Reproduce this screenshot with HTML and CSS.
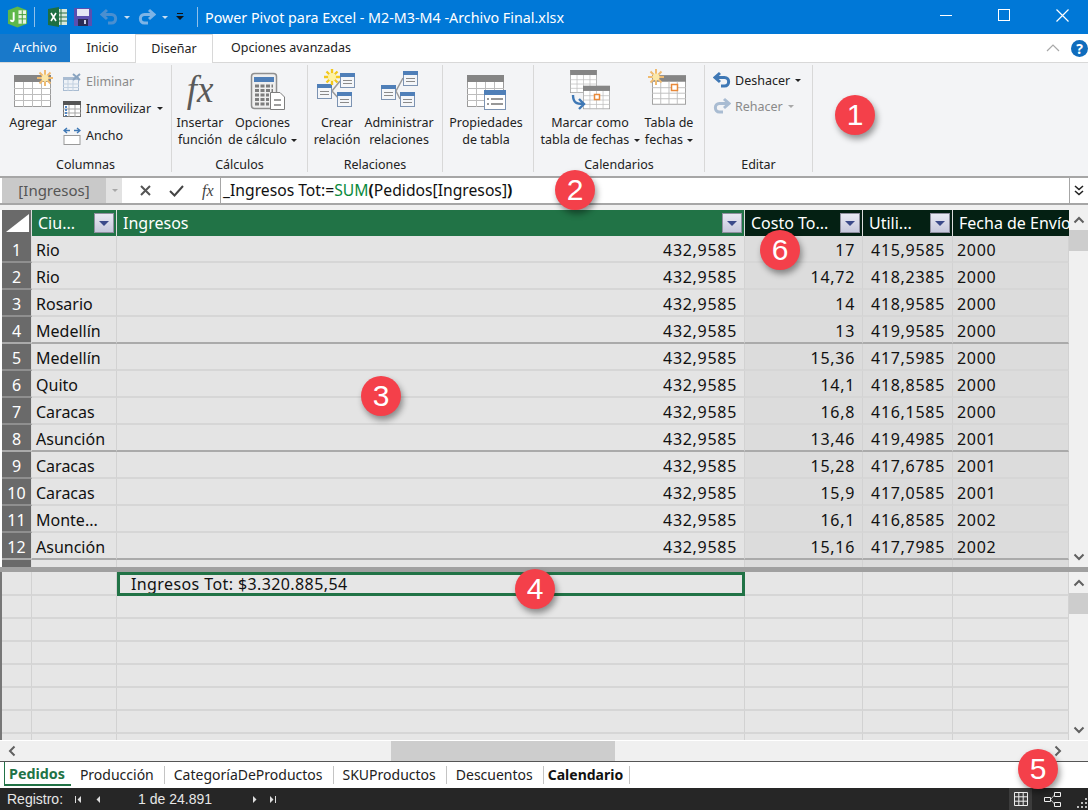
FILE: index.html
```html
<!DOCTYPE html>
<html>
<head>
    <title>Power Pivot para Excel</title>
    <link rel="stylesheet" href="styles.css">
</head>
<body>
<svg class="defs" width="0" height="0">
    <symbol id="tbl" viewBox="0 0 37 32">
        <rect x="0.5" y="0.5" width="36" height="31" fill="#fff" stroke="#9b9b9b"/>
        <rect x="0" y="0" width="37" height="7" fill="#858585"/>
        <path d="M0 13.5H37M0 19.5H37M0 25.5H37M9.5 7V32M18.5 7V32M27.5 7V32" stroke="#bdbdbd" fill="none"/>
    </symbol>
    <symbol id="win" viewBox="0 0 15 15">
        <rect x="0.5" y="0.5" width="14" height="14" fill="#f4f6f9" stroke="#7c93b2"/>
        <rect x="0" y="0" width="15" height="4" fill="#4f7fb8"/>
        <path d="M3 7.5H12M3 10.5H12" stroke="#8a8a8a" fill="none"/>
    </symbol>
    <symbol id="star" viewBox="0 0 16 16">
        <path d="M8 0V16M0 8H16M2.5 2.5L13.5 13.5M13.5 2.5L2.5 13.5" stroke="#f0bb70" stroke-width="2" fill="none"/>
        <circle cx="8" cy="8" r="3.5" fill="#fbe7a8"/>
    </symbol>
    <symbol id="star-y" viewBox="0 0 16 16">
        <path d="M8 0V16M0 8H16M2.5 2.5L13.5 13.5M13.5 2.5L2.5 13.5" stroke="#f2c81e" stroke-width="2.4" fill="none"/>
        <circle cx="8" cy="8" r="4" fill="#fff3a0"/>
    </symbol>
    <symbol id="undo" viewBox="0 0 18 18">
        <path d="M7 2L2 6.5L7 11M2.5 6.5H11.5C17 6.5 17 15 11.5 15H8" stroke="currentColor" stroke-width="3" fill="none"/>
    </symbol>
    <symbol id="chev" viewBox="0 0 12 8">
        <path d="M1.5 6.5L6 2L10.5 6.5" stroke="#606060" stroke-width="2" fill="none"/>
    </symbol>
</svg>

<div class="titlebar">
    <svg class="qa qa-first" width="21" height="22" viewBox="0 0 22 22">
        <path d="M1 4L11 0L21 4V18L11 22L1 18Z" fill="#5fb84a"/>
        <path d="M12 4H20V18H12Z" fill="#e8f5e0"/>
        <path d="M12 8.5H20M12 13H20M16 4V18" stroke="#3f9a35" fill="none"/>
        <path d="M7 6V14C7 16 4 16 4 14" stroke="#fff" stroke-width="2" fill="none"/>
    </svg>
    <span class="qa-sep"></span>
    <svg class="qa qa-xl" width="19" height="20" viewBox="0 0 19 20">
        <rect x="8" y="2" width="11" height="16" fill="#d8e8dc"/>
        <path d="M8 6H19M8 10H19M8 14H19M13 2V18" stroke="#2a6f45" fill="none"/>
        <path d="M0 2L11 0V20L0 18Z" fill="#1d6f42"/>
        <path d="M3 6L8 14M8 6L3 14" stroke="#fff" stroke-width="1.6" fill="none"/>
    </svg>
    <svg class="qa qa-save" width="18" height="18" viewBox="0 0 18 18">
        <path d="M0 0H16L18 2V18H0Z" fill="#5a4fb0"/>
        <rect x="3" y="1" width="12" height="7" fill="#e4e6f5"/>
        <rect x="4" y="11" width="10" height="7" fill="#2b2b55"/>
        <rect x="10" y="12" width="2" height="4" fill="#cfd2e8"/>
    </svg>
    <svg class="qa qa-undo" width="18" height="18"><use href="#undo"/></svg>
    <span class="caret caret-white"></span>
    <svg class="qa qa-redo" width="18" height="18"><use href="#undo"/></svg>
    <span class="caret caret-white"></span>
    <span class="qa-custom"></span>
    <span class="qa-sep qa-sep2"></span>
    <span class="doc-title">Power Pivot para Excel - M2-M3-M4 -Archivo Final.xlsx</span>
    <div class="winbtns">
        <span class="win-min"></span>
        <span class="win-max"></span>
        <svg width="13" height="13" viewBox="0 0 13 13"><path d="M0.5 0.5L12.5 12.5M12.5 0.5L0.5 12.5" stroke="#fff" stroke-width="1.2"/></svg>
    </div>
</div>

<div class="tabs">
    <div class="tab tab-file">Archivo</div>
    <div class="tab tab-home">Inicio</div>
    <div class="tab tab-on">Diseñar</div>
    <div class="tab tab-adv">Opciones avanzadas</div>
    <svg class="collapse" width="14" height="8" viewBox="0 0 14 8"><path d="M1 7L7 1L13 7" stroke="#a8a8a8" stroke-width="1.2" fill="none"/></svg>
    <span class="help">?</span>
</div>

<div class="ribbon">
    <div class="group g1">
        <div class="group-body">
            <div class="big b-agregar">
                <svg width="44" height="46" viewBox="0 0 44 46">
                    <use href="#tbl" x="3" y="7" width="37" height="32"/>
                    <use href="#star" x="26" y="2" width="16" height="16"/>
                </svg>
                <span>Agregar</span>
            </div>
            <div class="smalls s-cols">
                <div class="small dim">
                    <svg width="18" height="18" viewBox="0 0 18 18">
                        <rect x="0.5" y="4.5" width="15" height="13" fill="#eef2f7" stroke="#a9bcd2"/>
                        <rect x="0" y="4" width="16" height="3" fill="#a9bcd2"/>
                        <path d="M5 7V18M10 7V18M0 11H16M0 14.5H16" stroke="#c3d1e0"/>
                        <path d="M10 1L17 7M17 1L10 7" stroke="#8aa4c0" stroke-width="2"/>
                    </svg>
                    <span>Eliminar</span>
                </div>
                <div class="small">
                    <svg width="18" height="18" viewBox="0 0 18 18">
                        <rect x="0.5" y="1.5" width="17" height="15" fill="#fff" stroke="#6f6f6f"/>
                        <rect x="0" y="1" width="18" height="4" fill="#555"/>
                        <path d="M6 5V17M12 5V17M0 9H18M0 13H18" stroke="#a5a5a5"/>
                        <path d="M3 6V16" stroke="#4f86c6" stroke-width="2" stroke-dasharray="2 1"/>
                    </svg>
                    <span>Inmovilizar</span>
                    <span class="caret"></span>
                </div>
                <div class="small">
                    <svg width="18" height="18" viewBox="0 0 18 18">
                        <rect x="1" y="8.5" width="16" height="9" fill="#fff" stroke="#9a9a9a"/>
                        <path d="M4 1L1 3.5L4 6M1.5 3.5H7M14 1L17 3.5L14 6M16.5 3.5H11" stroke="#3f78b5" stroke-width="1.4" fill="none"/>
                    </svg>
                    <span>Ancho</span>
                </div>
            </div>
        </div>
        <div class="group-name">Columnas</div>
    </div>

    <div class="group g2">
        <div class="group-body">
            <div class="big b-func">
                <div class="fx-big">fx</div>
                <span>Insertar<br>función</span>
            </div>
            <div class="big b-calc">
                <svg width="44" height="46" viewBox="0 0 44 46">
                    <rect x="10.5" y="5.5" width="25" height="35" rx="3" fill="#efefef" stroke="#8f8f8f" stroke-width="1.5"/>
                    <rect x="13" y="9" width="20" height="5" fill="#4f7fb8"/>
                    <path d="M14 18H32M14 22.5H32M14 27H28M14 31.5H28M14 36H28" stroke="#7d7d7d" stroke-width="3" stroke-dasharray="4 1.5"/>
                    <path d="M29.5 24.5H39L43.5 29V41.5H29.5Z" fill="#fff" stroke="#7d7d7d"/>
                    <path d="M33 32H40M33 37H40" stroke="#7d7d7d" stroke-width="1.5"/>
                </svg>
                <span>Opciones<br>de cálculo <i class="caret"></i></span>
            </div>
        </div>
        <div class="group-name">Cálculos</div>
    </div>

    <div class="group g3">
        <div class="group-body">
            <div class="big b-crear">
                <svg width="44" height="46" viewBox="0 0 44 46">
                    <path d="M17 23L25 13M17 23L24 31" stroke="#9a9a9a" stroke-width="1.5" fill="none"/>
                    <use href="#win" x="25" y="5" width="15" height="15"/>
                    <use href="#win" x="2" y="16" width="15" height="15"/>
                    <use href="#win" x="22" y="24" width="15" height="15"/>
                    <use href="#star-y" x="9" y="1" width="16" height="16"/>
                </svg>
                <span>Crear<br>relación</span>
            </div>
            <div class="big b-admin">
                <svg width="44" height="46" viewBox="0 0 44 46">
                    <path d="M19 23L26 10M19 23L23 31" stroke="#9a9a9a" stroke-width="1.5" fill="none"/>
                    <use href="#win" x="26" y="3" width="15" height="15"/>
                    <use href="#win" x="4" y="17" width="15" height="15"/>
                    <use href="#win" x="23" y="24" width="15" height="15"/>
                </svg>
                <span>Administrar<br>relaciones</span>
            </div>
        </div>
        <div class="group-name">Relaciones</div>
    </div>

    <div class="group g4">
        <div class="group-body">
            <div class="big b-props">
                <svg width="44" height="46" viewBox="0 0 44 46">
                    <use href="#tbl" x="3" y="7" width="37" height="32"/>
                    <rect x="20.5" y="22.5" width="21" height="19" fill="#fff" stroke="#7c93b2"/>
                    <rect x="20" y="22" width="22" height="5" fill="#4f7fb8"/>
                    <path d="M27 31H39M27 36H39M23 31H25M23 36H25" stroke="#777" stroke-width="1.4"/>
                </svg>
                <span>Propiedades<br>de tabla</span>
            </div>
        </div>
        <div class="group-name"></div>
    </div>

    <div class="group g5">
        <div class="group-body">
            <div class="big b-marcar">
                <svg width="44" height="46" viewBox="0 0 44 46">
                    <use href="#tbl" x="2" y="2" width="27" height="23"/>
                    <use href="#tbl" x="15" y="17" width="27" height="25"/>
                    <rect x="26.5" y="26.5" width="5" height="5" fill="#fff" stroke="#e8893a" stroke-width="1.5"/>
                    <path d="M5 27C5 35 9 36 15 36M11 31L16 36L11 41" stroke="#3f78b5" stroke-width="2.4" fill="none"/>
                </svg>
                <span>Marcar como<br>tabla de fechas <i class="caret"></i></span>
            </div>
            <div class="big b-tabla">
                <svg width="44" height="46" viewBox="0 0 44 46">
                    <use href="#tbl" x="5" y="7" width="34" height="30"/>
                    <use href="#star" x="1" y="1" width="16" height="16"/>
                    <rect x="24.5" y="16.5" width="6" height="6" fill="#fff" stroke="#e8893a" stroke-width="1.5"/>
                </svg>
                <span>Tabla de<br>fechas <i class="caret"></i></span>
            </div>
        </div>
        <div class="group-name">Calendarios</div>
    </div>

    <div class="group g6">
        <div class="group-body">
            <div class="smalls s-edit">
                <div class="small">
                    <svg class="ic-undo" width="18" height="18"><use href="#undo"/></svg>
                    <span>Deshacer</span>
                    <span class="caret"></span>
                </div>
                <div class="small dim">
                    <svg class="ic-redo" width="18" height="18"><use href="#undo"/></svg>
                    <span>Rehacer</span>
                    <span class="caret caret-dim"></span>
                </div>
            </div>
        </div>
        <div class="group-name">Editar</div>
    </div>
</div>

<div class="formula">
    <div class="namebox">[Ingresos]</div>
    <div class="namedrop"><span class="caret caret-dim"></span></div>
    <div class="fbuttons">
        <svg width="11" height="11" viewBox="0 0 11 11"><path d="M1 1L10 10M10 1L1 10" stroke="#555" stroke-width="2"/></svg>
        <svg width="15" height="12" viewBox="0 0 15 12"><path d="M1 6L5.5 10.5L14 1" stroke="#444" stroke-width="2" fill="none"/></svg>
        <span class="fx-small">fx</span>
    </div>
    <div class="finput">_Ingresos Tot:=<span class="fn">SUM</span><b>(</b>Pedidos[Ingresos]<b>)</b></div>
    <div class="fexpand">
        <svg width="10" height="11" viewBox="0 0 10 11"><path d="M1 1L5 4.5L9 1M1 6L5 9.5L9 6" stroke="#222" stroke-width="1.6" fill="none"/></svg>
    </div>
</div>
<div class="band"></div>

<div class="pane pane-top">
    <div class="grid">
        <div class="row head">
            <div class="hcorner"><svg width="26" height="20" viewBox="0 0 26 20"><path d="M25 1V19H2Z" fill="#fff"/></svg></div>
            <div class="hcell"><span>Ciu...</span><span class="fbtn"></span></div>
            <div class="hcell"><span>Ingresos</span><span class="fbtn"></span></div>
            <div class="hcell hdark"><span>Costo To...</span><span class="fbtn"></span></div>
            <div class="hcell hdark"><span>Utili...</span><span class="fbtn"></span></div>
            <div class="hcell hdark hlast"><span>Fecha de Envío</span></div>
        </div>
        <div class="row"><div class="rn">1</div><div class="c">Rio</div><div class="c n">432,9585</div><div class="c n d">17</div><div class="c n d">415,9585</div><div class="c d">2000</div></div>
        <div class="row"><div class="rn">2</div><div class="c">Rio</div><div class="c n">432,9585</div><div class="c n d">14,72</div><div class="c n d">418,2385</div><div class="c d">2000</div></div>
        <div class="row"><div class="rn">3</div><div class="c">Rosario</div><div class="c n">432,9585</div><div class="c n d">14</div><div class="c n d">418,9585</div><div class="c d">2000</div></div>
        <div class="row sep"><div class="rn">4</div><div class="c">Medellín</div><div class="c n">432,9585</div><div class="c n d">13</div><div class="c n d">419,9585</div><div class="c d">2000</div></div>
        <div class="row"><div class="rn">5</div><div class="c">Medellín</div><div class="c n">432,9585</div><div class="c n d">15,36</div><div class="c n d">417,5985</div><div class="c d">2000</div></div>
        <div class="row"><div class="rn">6</div><div class="c">Quito</div><div class="c n">432,9585</div><div class="c n d">14,1</div><div class="c n d">418,8585</div><div class="c d">2000</div></div>
        <div class="row"><div class="rn">7</div><div class="c">Caracas</div><div class="c n">432,9585</div><div class="c n d">16,8</div><div class="c n d">416,1585</div><div class="c d">2000</div></div>
        <div class="row sep"><div class="rn">8</div><div class="c">Asunción</div><div class="c n">432,9585</div><div class="c n d">13,46</div><div class="c n d">419,4985</div><div class="c d">2001</div></div>
        <div class="row"><div class="rn">9</div><div class="c">Caracas</div><div class="c n">432,9585</div><div class="c n d">15,28</div><div class="c n d">417,6785</div><div class="c d">2001</div></div>
        <div class="row"><div class="rn">10</div><div class="c">Caracas</div><div class="c n">432,9585</div><div class="c n d">15,9</div><div class="c n d">417,0585</div><div class="c d">2001</div></div>
        <div class="row"><div class="rn">11</div><div class="c">Monte...</div><div class="c n">432,9585</div><div class="c n d">16,1</div><div class="c n d">416,8585</div><div class="c d">2002</div></div>
        <div class="row sep"><div class="rn">12</div><div class="c">Asunción</div><div class="c n">432,9585</div><div class="c n d">15,16</div><div class="c n d">417,7985</div><div class="c d">2002</div></div>
        <div class="row partial"><div class="rn"></div><div class="c"></div><div class="c"></div><div class="c d"></div><div class="c d"></div><div class="c d"></div></div>
    </div>
    <div class="vscroll">
        <svg class="arrow" width="12" height="8"><use href="#chev"/></svg>
        <div class="thumb"></div>
        <svg class="arrow arrow-down" width="12" height="8"><use href="#chev"/></svg>
    </div>
</div>

<div class="splitter"></div>

<div class="pane pane-calc">
    <div class="grid calc">
        <div class="row first"><div class="c e"></div><div class="c e"></div><div class="c e measure">Ingresos Tot: $3.320.885,54</div><div class="c e"></div><div class="c e"></div><div class="c e"></div></div>
        <div class="row"><div class="c e"></div><div class="c e"></div><div class="c e"></div><div class="c e"></div><div class="c e"></div><div class="c e"></div></div>
        <div class="row"><div class="c e"></div><div class="c e"></div><div class="c e"></div><div class="c e"></div><div class="c e"></div><div class="c e"></div></div>
        <div class="row"><div class="c e"></div><div class="c e"></div><div class="c e"></div><div class="c e"></div><div class="c e"></div><div class="c e"></div></div>
        <div class="row"><div class="c e"></div><div class="c e"></div><div class="c e"></div><div class="c e"></div><div class="c e"></div><div class="c e"></div></div>
        <div class="row"><div class="c e"></div><div class="c e"></div><div class="c e"></div><div class="c e"></div><div class="c e"></div><div class="c e"></div></div>
        <div class="row"><div class="c e"></div><div class="c e"></div><div class="c e"></div><div class="c e"></div><div class="c e"></div><div class="c e"></div></div>
        <div class="row last"><div class="c e"></div><div class="c e"></div><div class="c e"></div><div class="c e"></div><div class="c e"></div><div class="c e"></div></div>
    </div>
    <div class="vscroll vscroll-calc">
        <svg class="arrow" width="12" height="8"><use href="#chev"/></svg>
        <div class="thumb"></div>
        <svg class="arrow arrow-down" width="12" height="8"><use href="#chev"/></svg>
    </div>
</div>

<div class="hscroll">
    <svg class="harrow" width="8" height="12" viewBox="0 0 8 12"><path d="M6.5 1.5L2 6L6.5 10.5" stroke="#606060" stroke-width="2" fill="none"/></svg>
    <div class="hthumb"></div>
    <svg class="harrow harrow-r" width="8" height="12" viewBox="0 0 8 12"><path d="M1.5 1.5L6 6L1.5 10.5" stroke="#606060" stroke-width="2" fill="none"/></svg>
</div>

<div class="sheets">
    <div class="sheet sheet-on">Pedidos</div>
    <div class="sheet">Producción</div>
    <div class="sheet">CategoríaDeProductos</div>
    <div class="sheet">SKUProductos</div>
    <div class="sheet">Descuentos</div>
    <div class="sheet sheet-bold">Calendario</div>
</div>

<div class="status">
    <span class="reg">Registro:</span>
    <svg class="nav nav1" width="7" height="7" viewBox="0 0 7 7"><path d="M0 0H1V7H0ZM6 0V7L2.5 3.5Z" fill="#ddd"/></svg>
    <svg class="nav nav2" width="5" height="7" viewBox="0 0 5 7"><path d="M4 0V7L0.5 3.5Z" fill="#ddd"/></svg>
    <span class="reccount">1 de 24.891</span>
    <svg class="nav nav3" width="5" height="7" viewBox="0 0 5 7"><path d="M1 0V7L4.5 3.5Z" fill="#ddd"/></svg>
    <svg class="nav nav4" width="7" height="7" viewBox="0 0 7 7"><path d="M6 0H7V7H6ZM1 0V7L4.5 3.5Z" fill="#ddd"/></svg>
    <div class="view view-on">
        <svg width="14" height="14" viewBox="0 0 14 14"><path d="M0.5 0.5H13.5V13.5H0.5ZM0.5 4.8H13.5M0.5 9.2H13.5M4.8 0.5V13.5M9.2 0.5V13.5" stroke="#eee" fill="none"/></svg>
    </div>
    <div class="view view-diagram">
        <svg width="17" height="15" viewBox="0 0 17 15">
            <path d="M6.5 7.5L10.5 3M6.5 7.5L10.5 12" stroke="#bbb" fill="none"/>
            <path d="M0.5 5.5H6.5V9.5H0.5ZM10.5 0.5H16.5V4.5H10.5ZM10.5 10.5H16.5V14.5H10.5Z" stroke="#eee" fill="#262626"/>
        </svg>
    </div>
    <svg class="grip" width="12" height="12" viewBox="0 0 12 12"><path d="M9 1h2v2H9zM5 5h2v2H5zM9 5h2v2H9zM1 9h2v2H1zM5 9h2v2H5zM9 9h2v2H9z" fill="#bdbdbd"/></svg>
</div>

<div class="badge b1">1</div>
<div class="badge b2">2</div>
<div class="badge b3">3</div>
<div class="badge b4">4</div>
<div class="badge b5">5</div>
<div class="badge b6">6</div>
</body>
</html>
```

FILE: styles.css
```css
body {
    position: relative;
    width: 1088px;
    height: 810px;
    margin: 0;
    overflow: hidden;
    background-color: #fff;
    color: #222;
    font-family: "Noto Sans", "Open Sans", sans-serif;
    font-size: 12.5px;
}

.defs {
    position: absolute;
}

/* title bar */
.titlebar {
    display: flex;
    align-items: center;
    height: 34px;
    background-color: #0078d7;
    color: #fff;
}

.qa {
    flex: none;
}

.qa-first {
    margin-left: 7px;
}

.qa-sep {
    width: 1px;
    height: 20px;
    margin-left: 6px;
    background-color: #8fc0ea;
}

.qa-xl {
    margin-left: 13px;
}

.qa-save {
    margin-left: 7px;
}

.qa-undo {
    margin-left: 8px;
    color: #4a8fd0;
}

.qa-redo {
    margin-left: 8px;
    color: #7db4e6;
    transform: scaleX(-1);
}

.qa-custom {
    width: 6px;
    height: 1px;
    margin-left: 9px;
    border-top: 1px solid #111;
    position: relative;
    top: -3px;
}

.qa-custom::after {
    content: "";
    position: absolute;
    left: -1px;
    top: 2px;
    border: 4px solid transparent;
    border-top-color: #111;
}

.qa-sep2 {
    margin-left: 14px;
}

.doc-title {
    margin-left: 7px;
    font-size: 14.3px;
    white-space: nowrap;
}

.winbtns {
    display: flex;
    align-items: center;
    gap: 46px;
    margin-left: auto;
    margin-right: 19px;
    margin-bottom: 4px;
}

.win-min {
    width: 12px;
    height: 1px;
    background-color: #fff;
}

.win-max {
    width: 10px;
    height: 10px;
    border: 1px solid #fff;
}

/* tabs */
.tabs {
    display: flex;
    align-items: center;
    height: 28px;
    border-bottom: 1px solid #d8d8d8;
    box-sizing: content-box;
}

.tab {
    height: 28px;
    line-height: 28px;
    text-align: center;
    box-sizing: border-box;
}

.tab-file {
    width: 70px;
    background-color: #1979ca;
    color: #fff;
}

.tab-home {
    width: 65px;
}

.tab-on {
    width: 78px;
    height: 29px;
    border: 1px solid #d8d8d8;
    border-bottom: 0;
    position: relative;
    z-index: 1;
    background-color: #fff;
    align-self: flex-start;
}

.tab-adv {
    margin-left: 18px;
}

.collapse {
    margin-left: auto;
}

.help {
    width: 17px;
    height: 17px;
    margin: 0 0 0 11px;
    border-radius: 50%;
    background-color: #0f6cbd;
    color: #fff;
    font-size: 14px;
    font-weight: bold;
    line-height: 17px;
    text-align: center;
}

/* ribbon */
.ribbon {
    display: flex;
    height: 113px;
    background-color: #f3f4f6;
}

.group {
    display: flex;
    flex-direction: column;
    height: 107px;
    margin-top: 2px;
    border-right: 1px solid #d8d8d8;
    box-sizing: border-box;
}

.g1 { width: 172px; }
.g2 { width: 136px; }
.g3 { width: 135px; }
.g4 { width: 91px; }
.g5 { width: 171px; }
.g6 { width: 108px; }

.group-body {
    display: flex;
    flex: 1;
    padding: 3px 0 0 6px;
}

.g1 .group-body,
.g6 .group-body {
    padding-left: 8px;
}

.group-name {
    height: 18px;
    line-height: 22px;
    text-align: center;
    white-space: nowrap;
}

.big {
    display: flex;
    flex-direction: column;
    align-items: center;
    line-height: 17px;
    text-align: center;
    white-space: nowrap;
}

.big svg {
    display: block;
    flex: none;
}

.b-agregar { width: 50px; }
.b-func { width: 44px; }
.b-calc { width: 69px; margin-left: 6px; }
.b-crear { width: 46px; }
.b-admin { width: 68px; margin-left: 5px; }
.b-props { width: 74px; }
.b-marcar { width: 100px; }
.b-tabla { width: 50px; margin-left: 4px; }

.fx-big {
    height: 46px;
    color: #5a5a5a;
    font-family: "Liberation Serif", serif;
    font-size: 37px;
    font-style: italic;
    line-height: 44px;
}

.smalls {
    display: flex;
    flex-direction: column;
}

.s-cols {
    margin-left: 5px;
}

.small {
    display: flex;
    align-items: center;
    gap: 5px;
    height: 27px;
    white-space: nowrap;
}

.small svg {
    flex: none;
}

.small.dim {
    color: #8a8a8a;
}

.ic-undo {
    color: #3f78b5;
}

.ic-redo {
    color: #a9bcd2;
    transform: scaleX(-1);
}

.s-edit {
    margin-top: -1px;
}

.s-edit .small {
    height: 26px;
    gap: 4px;
}

.caret {
    display: inline-block;
    width: 0;
    height: 0;
    margin-left: 1px;
    border-top: 3px solid #222;
    border-left: 3px solid transparent;
    border-right: 3px solid transparent;
    vertical-align: middle;
}

.titlebar .caret {
    margin-left: 6px;
}

.caret-white {
    border-top-color: #c8def2;
}

.caret-dim {
    border-top-color: #a8a8a8;
}

/* formula bar */
.formula {
    display: flex;
    height: 29px;
    border-top: 2px solid #a6a6a6;
    border-bottom: 2px solid #a6a6a6;
    background-color: #fff;
    box-sizing: border-box;
}

.namebox {
    width: 104px;
    margin-left: 2px;
    background-color: #c9c9c9;
    color: #555;
    font-size: 15px;
    line-height: 25px;
    text-align: center;
}

.namedrop {
    display: flex;
    align-items: center;
    justify-content: center;
    width: 16px;
    background-color: #e2e2e2;
}

.fbuttons {
    display: flex;
    align-items: center;
    gap: 18px;
    width: 99px;
    padding-left: 18px;
    box-sizing: border-box;
    border-right: 1px solid #a6a6a6;
}

.fx-small {
    color: #444;
    font-family: "Liberation Serif", serif;
    font-size: 16px;
    font-style: italic;
}

.finput {
    flex: 1;
    padding-left: 2px;
    color: #111;
    font-size: 15.7px;
    line-height: 24px;
    white-space: nowrap;
}

.fn {
    color: #0a8a3c;
}

.fexpand {
    display: flex;
    align-items: center;
    justify-content: center;
    width: 18px;
    border-left: 1px solid #a6a6a6;
}

.band {
    height: 5px;
    background-color: #f0f0f0;
}

/* data grid */
.pane {
    display: flex;
}

.pane-top {
    height: 357px;
}

.pane-calc {
    height: 168px;
}

.grid {
    width: 1069px;
    padding-left: 2px;
    box-sizing: border-box;
}

.row {
    display: grid;
    grid-template-columns: 30px 85px 628px 118px 90px 116px;
    grid-template-rows: minmax(0, 1fr);
    height: 27px;
    font-size: 16px;
    color: #111;
}

.head {
    height: 26px;
    color: #fff;
}

.hcorner {
    display: flex;
    align-items: center;
    justify-content: center;
    background-color: #6a6a6a;
    border-right: 1px solid #ddd;
}

.hcell {
    display: flex;
    align-items: center;
    justify-content: space-between;
    padding: 0 2px 0 6px;
    overflow: hidden;
    background-color: #217346;
    border-right: 1px solid #ddd;
    white-space: nowrap;
    line-height: 26px;
}

.hdark {
    background-color: #042013;
}

.hlast {
    border-right: 0;
}

.fbtn {
    position: relative;
    flex: none;
    width: 18px;
    height: 18px;
    border: 1px solid #8f8f9f;
    background: linear-gradient(#e8e8f2, #c6c8dc);
}

.fbtn::after {
    content: "";
    position: absolute;
    left: 4px;
    top: 7px;
    border: 5px solid transparent;
    border-top-color: #3b4a8a;
    border-bottom: 0;
}

.rn {
    min-height: 0;
    padding-top: 2px;
    overflow: hidden;
    background-color: #6a6a6a;
    border-right: 1px solid #ddd;
    border-bottom: 2px solid #8f8f8f;
    color: #fff;
    font-size: 16px;
    line-height: 24px;
    text-align: center;
}

.c {
    min-height: 0;
    padding: 2px 4px 0;
    overflow: hidden;
    background-color: #e4e4e4;
    border-right: 1px solid #d2d2d2;
    border-bottom: 2px solid #d6d6d6;
    line-height: 24px;
    white-space: nowrap;
}

.n {
    padding-right: 7px;
    text-align: right;
}

.d {
    background-color: #dcdcdc;
}

.n,
.d {
    letter-spacing: 0.7px;
}

.sep .c,
.sep .rn {
    border-bottom: 2px solid #aaa;
}

.partial {
    height: 7px;
}

.partial .c,
.partial .rn {
    border-bottom: 0;
}

/* scroll bars */
.vscroll {
    display: flex;
    flex-direction: column;
    align-items: center;
    width: 19px;
    background-color: #f0f0f0;
}

.arrow {
    flex: none;
    margin: 6px 0;
}

.thumb {
    width: 100%;
    height: 21px;
    background-color: #cdcdcd;
}

.arrow-down {
    margin-top: auto;
    transform: rotate(180deg);
}

.vscroll-calc {
    padding-top: 1px;
}

.splitter {
    height: 5px;
    background-color: #a0a0a0;
}

/* measure grid */
.calc {
    border-left: 2px solid #777;
    padding-left: 0;
}

.calc .row {
    height: 23px;
}

.calc .first {
    height: 24px;
}

.calc .last {
    height: 6px;
}

.calc .last .c {
    border-bottom: 0;
}

.e {
    background-color: #e6e6e6;
}

.measure {
    padding: 0 0 0 14px;
    outline: 3px solid #217346;
    outline-offset: -3px;
    position: relative;
    letter-spacing: 0.4px;
    line-height: 25px;
}

.hscroll {
    display: flex;
    align-items: center;
    height: 21px;
    border-top: 1px solid #fff;
    box-sizing: border-box;
    background-color: #f0f0f0;
}

.harrow {
    flex: none;
    margin-left: 8px;
}

.hthumb {
    width: 224px;
    height: 100%;
    margin-left: 375px;
    background-color: #cdcdcd;
}

.harrow-r {
    margin-left: auto;
    margin-right: 26px;
}

/* sheet tabs */
.sheets {
    display: flex;
    height: 27px;
    padding-left: 4px;
    border-top: 1px solid #555;
    box-sizing: border-box;
    font-size: 14px;
    background-color: #fff;
}

.sheet {
    height: 18px;
    margin-top: 4px;
    padding: 0 10px 0 9px;
    border-right: 1px solid #c4c4c4;
    line-height: 18px;
    white-space: nowrap;
}

.sheet-on {
    height: 24px;
    margin-top: 0;
    padding: 0 6px 0 4px;
    border-left: 1px solid #217346;
    border-bottom: 2px solid #217346;
    border-right: 0;
    color: #217346;
    font-size: 14.3px;
    font-weight: bold;
    line-height: 24px;
    box-sizing: border-box;
}

.sheet-bold {
    padding: 0 6px 0 4px;
    font-weight: bold;
    color: #111;
}

/* status bar */
.status {
    display: flex;
    align-items: center;
    height: 22px;
    background-color: #262626;
    color: #e6e6e6;
    font-family: "Liberation Sans", sans-serif;
    font-size: 14px;
}

.reg {
    margin-left: 7px;
}

.nav {
    flex: none;
}

.nav1 { margin-left: 12px; }
.nav2 { margin-left: 14px; }
.nav3 { margin-left: 40px; }
.nav4 { margin-left: 12px; }

.reccount {
    margin-left: 37px;
}

.view {
    display: flex;
    align-items: center;
    justify-content: center;
    height: 22px;
}

.view-on {
    width: 23px;
    margin-left: auto;
    background-color: #3c3c3c;
}

.view-diagram {
    width: 17px;
    margin-left: 12px;
}

.grip {
    flex: none;
    margin: 8px 0 0 15px;
}

/* numbered callouts */
.badge {
    position: absolute;
    width: 40px;
    height: 40px;
    border-radius: 50%;
    background-color: #f4404a;
    box-shadow: 2px 4px 6px rgba(0, 0, 0, 0.4);
    color: #fff;
    font-family: "Liberation Sans", sans-serif;
    font-size: 30px;
    line-height: 40px;
    text-align: center;
}

.b1 { left: 835px; top: 95px; }
.b2 { left: 555px; top: 170px; }
.b3 { left: 361px; top: 376px; }
.b4 { left: 515px; top: 569px; }
.b5 { left: 1018px; top: 749px; }
.b6 { left: 760px; top: 230px; }
```
